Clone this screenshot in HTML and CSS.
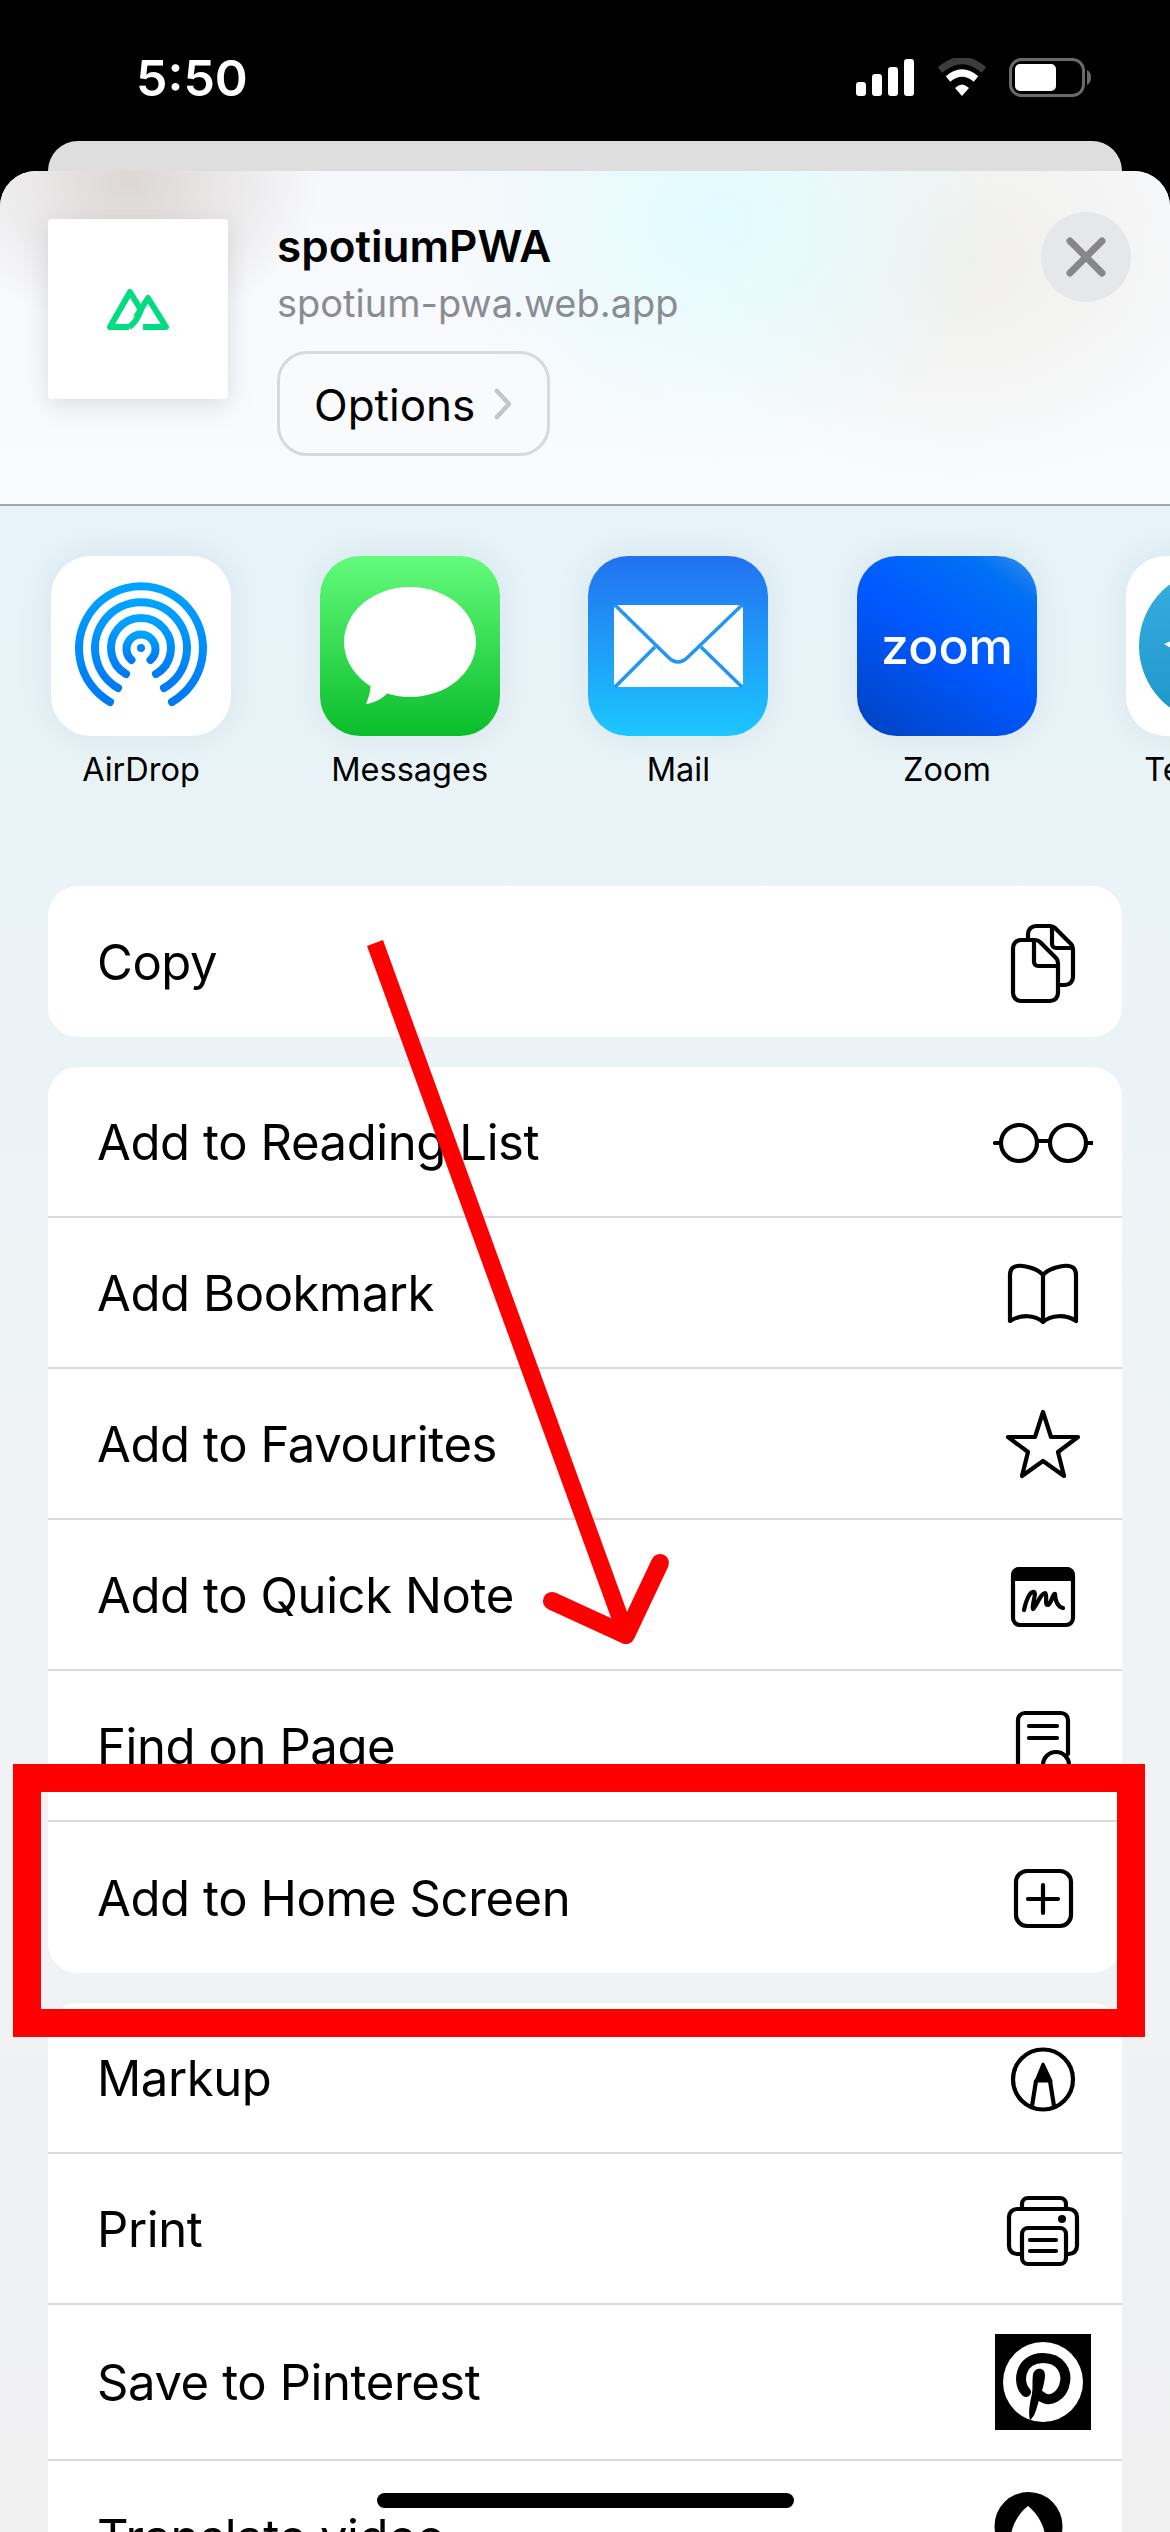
FILE: index.html
```html
<!DOCTYPE html>
<html lang="en">
<head>
	<meta charset="UTF-8">
	<meta name="viewport" content="width=device-width">
	<title>Share sheet</title>
	<link rel="stylesheet" href="styles.css">
</head>
<body>
<div class="screen">

	<div class="status-bar">
		<span class="time">5:50</span>
		<svg class="status-icons" width="235" height="39" viewBox="856 58 235 39">
			<rect x="856" y="82" width="10" height="14" rx="3" fill="#fff"/>
			<rect x="872" y="74" width="10" height="22" rx="3" fill="#fff"/>
			<rect x="888" y="67" width="10" height="29" rx="3" fill="#fff"/>
			<rect x="904" y="59" width="10" height="37" rx="3" fill="#fff"/>
			<path d="M940 70 Q962 51 984 70" fill="none" stroke="#3c3c3c" stroke-width="7"/>
			<path d="M948 79 Q962 67 976 79" fill="none" stroke="#fff" stroke-width="7"/>
			<path d="M955 88 Q962 81 969 88 L962 96 Z" fill="#fff"/>
			<rect x="1010.5" y="59.5" width="73" height="36" rx="11" fill="none" stroke="#6a6a6a" stroke-width="3"/>
			<rect x="1015" y="64" width="41" height="27" rx="5" fill="#fff"/>
			<path d="M1087 70 Q1091 72 1091 77 Q1091 83 1087 85 Z" fill="#6a6a6a"/>
		</svg>
	</div>

	<div class="back-card"></div>

	<div class="sheet">

		<header class="sheet-head">
			<div class="site-icon">
				<svg width="180" height="180" viewBox="0 0 180 180">
					<path d="M81 108 H62 L82 73 L93 91 Q88 104 81 108" fill="none" stroke="#00dc82" stroke-width="6" stroke-linejoin="round"/>
					<path d="M88 98 L100 79 L118 108 H95" fill="none" stroke="#00dc82" stroke-width="6" stroke-linejoin="round"/>
				</svg>
			</div>
			<div class="site-info">
				<div class="site-name">spotiumPWA</div>
				<div class="site-url">spotium-pwa.web.app</div>
				<div class="options-btn">
					<span>Options</span>
					<svg width="20" height="32" viewBox="0 0 20 32"><path d="M4 3 L16 16 L4 29" fill="none" stroke="#c4c5c9" stroke-width="4.5" stroke-linecap="round" stroke-linejoin="round"/></svg>
				</div>
			</div>
			<div class="close-btn">
				<svg width="90" height="90" viewBox="0 0 90 90"><path d="M29 29 L61 61 M61 29 L29 61" stroke="#87878b" stroke-width="7" stroke-linecap="round"/></svg>
			</div>
		</header>

		<section class="apps">
			<div class="app">
				<div class="app-icon icon-airdrop">
					<svg width="180" height="180" viewBox="0 0 180 180">
						<defs><linearGradient id="air" x1="0" y1="0" x2="0" y2="1"><stop offset="0" stop-color="#00a3ff"/><stop offset="1" stop-color="#0079f5"/></linearGradient></defs>
						<g fill="none" stroke="url(#air)" stroke-width="8" stroke-linecap="round">
							<path d="M59 146 A62 62 0 1 1 121 146"/>
							<path d="M67 132 A46 46 0 1 1 113 132"/>
							<path d="M75 118 A30 30 0 1 1 105 118"/>
							<path d="M80.500 104 A14.500 14.500 0 1 1 99.500 104"/>
						</g>
						<circle cx="90" cy="92" r="4" fill="#0088fa"/>
					</svg>
				</div>
				<span class="app-label">AirDrop</span>
			</div>
			<div class="app">
				<div class="app-icon icon-messages">
					<svg width="180" height="180" viewBox="0 0 180 180">
						<ellipse cx="90" cy="86" rx="66" ry="55" fill="#fff"/>
						<path d="M50 122 C52 135 48 142 46 148 C55 147 64 142 70 134 Z" fill="#fff"/>
					</svg>
				</div>
				<span class="app-label">Messages</span>
			</div>
			<div class="app">
				<div class="app-icon icon-mail">
					<svg width="180" height="180" viewBox="0 0 180 180">
						<rect x="26" y="49" width="129" height="82" rx="4" fill="#fff"/>
						<g fill="none" stroke="#2295f5" stroke-width="3.500">
							<path d="M27 49 L80 101 Q90 111 100 101 L154 49"/>
							<path d="M67 91 L27 131 M113 91 L154 131"/>
						</g>
					</svg>
				</div>
				<span class="app-label">Mail</span>
			</div>
			<div class="app">
				<div class="app-icon icon-zoom"><span class="zoom-word">zoom</span></div>
				<span class="app-label">Zoom</span>
			</div>
			<div class="app">
				<div class="app-icon icon-telegram">
					<svg width="180" height="180" viewBox="0 0 180 180">
						<defs><linearGradient id="tg" x1="0" y1="0" x2="0" y2="1"><stop offset="0" stop-color="#37aee2"/><stop offset="1" stop-color="#1e96c8"/></linearGradient></defs>
						<circle cx="90" cy="90" r="77" fill="url(#tg)"/>
						<path d="M38 88 L128 52 L112 132 L84 112 L70 126 L66 104 Z" fill="#fff"/>
					</svg>
				</div>
				<span class="app-label">Telegram</span>
			</div>
		</section>

		<div class="card">
			<div class="row">
				<span class="row-text">Copy</span>
				<svg class="row-icon" viewBox="0 0 100 100"><g class="line">
					<path d="M35 27 V22 A8 8 0 0 1 43 14 H57 Q60 14 62 16 L78 32 Q80 34 80 37 V65 A8 8 0 0 1 72 73 H66"/>
					<path d="M59 15 V32 A4 4 0 0 0 63 36 H79"/>
					<path d="M28 28 H42 Q45 28 47 30 L63 46 Q65 48 65 51 V81 A8 8 0 0 1 57 89 H28 A8 8 0 0 1 20 81 V36 A8 8 0 0 1 28 28 Z"/>
					<path d="M41 29 V50 A4 4 0 0 0 45 54 H64"/>
				</g></svg>
			</div>
		</div>

		<div class="card">
			<div class="row">
				<span class="row-text">Add to Reading List</span>
				<svg class="row-icon" viewBox="0 0 100 100"><g class="line">
					<circle cx="26" cy="51" r="18"/>
					<circle cx="75" cy="51" r="18"/>
					<path d="M44 49 H57 M2 51 H8 M93 51 H99"/>
				</g></svg>
			</div>
			<div class="row">
				<span class="row-text">Add Bookmark</span>
				<svg class="row-icon" viewBox="0 0 100 100"><g class="line">
					<path d="M50 32 C44 25 30 22 24 23 Q17 24 17 32 V78 C28 71 42 72 50 79 C58 72 72 71 83 78 V32 Q83 24 76 23 C70 22 56 25 50 32 Z M50 32 V79"/>
				</g></svg>
			</div>
			<div class="row">
				<span class="row-text">Add to Favourites</span>
				<svg class="row-icon" viewBox="0 0 100 100"><g class="line">
					<path d="M50 18 L58 43 H85 L65 58 L71 82 L50 67 L29 82 L35 58 L15 43 H42 Z"/>
				</g></svg>
			</div>
			<div class="row">
				<span class="row-text">Add to Quick Note</span>
				<svg class="row-icon" viewBox="0 0 100 100">
					<path d="M18 36 V30 A8 8 0 0 1 26 22 H74 A8 8 0 0 1 82 30 V36 Z" fill="#000"/>
					<g class="line">
						<rect x="20" y="24" width="60" height="56" rx="7"/>
						<path d="M31 65 C33 55 37 46 41 47 C44 48 38 62 40 64 C44 60 48 48 52 48 C55 50 51 60 55 60 C58 59 60 48 62 49 C62 56 65 62 70 63"/>
					</g>
				</svg>
			</div>
			<div class="row">
				<span class="row-text">Find on Page</span>
				<svg class="row-icon" viewBox="0 0 100 100"><g class="line">
					<path d="M50 84 H32 A7 7 0 0 1 25 77 V24 A7 7 0 0 1 32 17 H68 A7 7 0 0 1 75 24 V58"/>
					<path d="M36 30 H64 M36 42 H64"/>
					<circle cx="63" cy="69" r="13"/>
				</g></svg>
			</div>
			<div class="row">
				<span class="row-text">Add to Home Screen</span>
				<svg class="row-icon" viewBox="0 0 100 100"><g class="line">
					<rect x="23" y="23" width="55" height="55" rx="11"/>
					<path d="M35 51 H65 M50 37 V65"/>
				</g></svg>
			</div>
		</div>

		<div class="card">
			<div class="row">
				<span class="row-text">Markup</span>
				<svg class="row-icon" viewBox="0 0 100 100">
					<path d="M50 36 L43 53 H58 Z" fill="#000" stroke="#000" stroke-width="3" stroke-linejoin="round"/>
					<g class="line">
						<circle cx="50" cy="51.500" r="30"/>
						<path d="M43 53 L39 78 M57 53 L61 78"/>
					</g>
				</svg>
			</div>
			<div class="row">
				<span class="row-text">Print</span>
				<svg class="row-icon" viewBox="0 0 100 100">
					<g class="line">
						<path d="M29 29 V25 A6 6 0 0 1 35 19 H67 A6 6 0 0 1 73 25 V29"/>
						<path d="M28 75 H24 A8 8 0 0 1 16 67 V38 A8 8 0 0 1 24 30 H76 A8 8 0 0 1 84 38 V67 A8 8 0 0 1 76 75 H73"/>
						<rect x="29" y="49" width="44" height="36" rx="6"/>
						<path d="M37 61 H63 M37 72 H63"/>
					</g>
					<circle cx="69" cy="40" r="4"/>
				</svg>
			</div>
			<div class="row row-tall">
				<span class="row-text">Save to Pinterest</span>
				<svg class="pin-icon" width="96" height="96" viewBox="0 0 96 96">
					<rect width="96" height="96" fill="#000"/>
					<circle cx="48" cy="48" r="40" fill="#fff"/>
					<path d="M31 58 C22 50 24 24 48 24 C66 24 72 38 70 48 C68 62 54 70 46 62" fill="none" stroke="#000" stroke-width="10" stroke-linecap="round"/>
					<path d="M38 40 C40 33 50 33 50 41 C50 50 44 66 42 73 C40 80 38 84 35 86 C33 78 35 68 37 60 C38 54 37 46 38 40 Z" fill="#000"/>
				</svg>
			</div>
			<div class="row">
				<span class="row-text">Translate video</span>
				<svg class="row-icon" viewBox="0 0 100 100">
					<circle cx="35.500" cy="39" r="34" fill="#000"/>
					<path d="M35 19 C42 24 52 38 52 50 C52 62 44 70 35 70 C26 70 18 62 18 50 C18 38 28 24 35 19 Z" fill="#fff"/>
				</svg>
			</div>
		</div>

	</div>

	<!-- annotations drawn on top of the screenshot -->
	<div class="red-box"></div>
	<svg class="red-arrow" width="1170" height="2532" viewBox="0 0 1170 2532">
		<path d="M375 943 L626 1634" fill="none" stroke="#f00" stroke-width="17"/>
		<path d="M552 1601 L626 1635 L660 1563" fill="none" stroke="#f00" stroke-width="18" stroke-linecap="round" stroke-linejoin="round"/>
	</svg>
	<div class="home-bar"></div>

</div>
</body>
</html>
```

FILE: styles.css
```css
* { box-sizing: border-box; }

html, body {
	margin: 0;
	padding: 0;
	background: #000;
}

body {
	font-family: Inter, "Liberation Sans", sans-serif;
	color: #000;
}

.screen {
	position: relative;
	width: 1170px;
	height: 2532px;
	overflow: hidden;
	background: #000;
}

/* status bar */
.status-bar {
	display: flex;
	justify-content: space-between;
	align-items: flex-start;
	height: 141px;
	padding: 58px 79px 0 136px;
}

.time {
	color: #fff;
	font-size: 50px;
	font-weight: 600;
	line-height: 40px;
}

.status-icons { display: block; }

.back-card {
	height: 30px;
	margin: 0 48px;
	background: #dedede;
	border-radius: 30px 30px 0 0;
}

/* sheet */
.sheet {
	height: 2361px;
	overflow: hidden;
	border-radius: 36px 36px 0 0;
	background: linear-gradient(180deg, #e4f2f9 0, #e6f3f8 380px, #ebf3f6 800px, #f0f3f5 1400px, #f0f0f1 2361px);
}

.sheet-head {
	display: flex;
	height: 335px;
	padding: 48px 39px 0 48px;
	border-bottom: 2px solid #a0a8b0;
	background:
		radial-gradient(190px 150px at 130px 10px, #dcd7d5 0, rgba(224,220,218,0) 100%),
		radial-gradient(280px 240px at 720px 50px, #e2fcff 0, rgba(226,252,255,0) 100%),
		radial-gradient(280px 220px at 960px 90px, #f0efeb 0, rgba(240,239,235,0) 100%),
		linear-gradient(180deg, #f7f8fb 0, #f9fbfd 100%);
}

.site-icon {
	flex: none;
	width: 180px;
	height: 180px;
	background: #fff;
	border-radius: 4px;
	box-shadow: 0 6px 24px rgba(120, 120, 130, .22);
}

.site-icon svg,
.app-icon svg { display: block; }

.site-info {
	flex: 1;
	margin-left: 49px;
}

.site-name {
	font-size: 44px;
	font-weight: 600;
	line-height: 55px;
}

.site-url {
	margin-top: 6px;
	color: #8a8c94;
	font-size: 38px;
	line-height: 46px;
}

.options-btn {
	display: flex;
	align-items: center;
	justify-content: space-between;
	width: 273px;
	height: 105px;
	margin-top: 25px;
	padding: 0 34px 0 34px;
	border: 3px solid #d8d9de;
	border-radius: 30px;
	font-size: 44px;
	line-height: 56px;
}

.options-btn span { padding-top: 2px; }

.close-btn {
	flex: none;
	width: 90px;
	height: 90px;
	margin-top: -7px;
	border-radius: 50%;
	background: #e6e7e8;
}

/* app row */
.apps {
	display: flex;
	gap: 88.7px;
	height: 380px;
	padding: 50px 0 0 51px;
	overflow: hidden;
}

.app {
	display: flex;
	flex: none;
	flex-direction: column;
	align-items: center;
	width: 180px;
}

.app-icon {
	display: flex;
	align-items: center;
	justify-content: center;
	width: 180px;
	height: 180px;
	overflow: hidden;
	border-radius: 40px;
	box-shadow: 0 0 30px rgba(150, 175, 195, .2);
}

.app-label {
	margin-top: 14px;
	font-size: 32.5px;
	line-height: 40px;
	white-space: nowrap;
}

.icon-airdrop,
.icon-telegram { background: #fff; }
.icon-messages { background: linear-gradient(180deg, #64fb7c, #0abd2a); }
.icon-mail { background: linear-gradient(180deg, #2271f0, #1cc7ff); }
.icon-zoom { background: linear-gradient(215deg, #3a8eec 0, #0070f5 16%, #0058ff 50%, #0042c0 100%); }

.zoom-word {
	color: #fff;
	font-size: 50px;
	font-weight: 500;
	line-height: 1;
}

/* action cards */
.card {
	margin: 0 48px 30px;
	overflow: hidden;
	border-radius: 30px;
	background: #fff;
}

.row {
	display: flex;
	align-items: center;
	justify-content: space-between;
	height: 151px;
	padding: 0 29px 0 49px;
	border-bottom: 2px solid #dadadc;
}

.row:last-child { border-bottom: 0; }

.row-tall {
	height: 156px;
	padding-right: 31px;
}

.row-text {
	padding-top: 2px;
	font-size: 49px;
	letter-spacing: -.4px;
	line-height: 60px;
}

.row-icon {
	flex: none;
	width: 100px;
	height: 100px;
}

.row-icon .line {
	fill: none;
	stroke: #000;
	stroke-width: 4.2;
	stroke-linecap: round;
	stroke-linejoin: round;
}

/* annotations */
.red-box {
	position: absolute;
	left: 13px;
	top: 1764px;
	width: 1132px;
	height: 273px;
	border: 28px solid #f00;
}

.red-arrow {
	position: absolute;
	left: 0;
	top: 0;
}

.home-bar {
	position: absolute;
	left: 377px;
	top: 2493px;
	width: 417px;
	height: 15px;
	border-radius: 8px;
	background: #000;
}
```
